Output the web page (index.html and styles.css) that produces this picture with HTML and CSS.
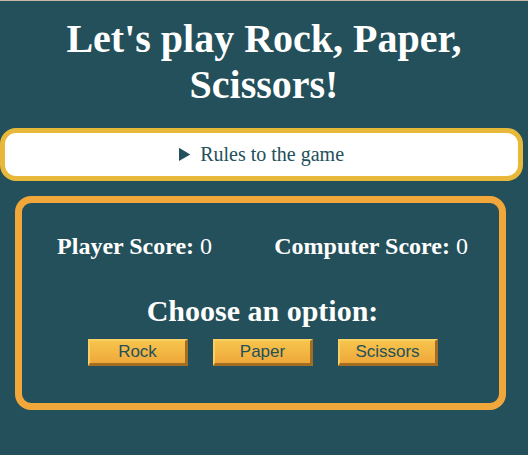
FILE: index.html
```html
<!DOCTYPE html>
<html lang="en">
<head>
<meta charset="utf-8">
<title>Rock, Paper, Scissors</title>
<link rel="stylesheet" href="styles.css">
</head>
<body>
  <h1 class="title">Let's play Rock, Paper, Scissors!</h1>
  <details class="rules">
    <summary class="rules-summary">Rules to the game</summary>
  </details>
  <section class="game">
    <div class="scores">
      <div class="score"><b>Player Score:</b> 0</div>
      <div class="score"><b>Computer Score:</b> 0</div>
    </div>
    <h2 class="choose">Choose an option:</h2>
    <div class="options">
      <button class="opt">Rock</button>
      <button class="opt">Paper</button>
      <button class="opt">Scissors</button>
    </div>
  </section>
</body>
</html>
```

FILE: styles.css
```css
html, body {
  margin: 0;
  padding: 0;
}
body {
  background: #23505a;
  border-top: 1px solid #c7b8a6;
  min-height: 454px;
  font-family: "Liberation Serif", "Times New Roman", serif;
  color: #ffffff;
}
.title {
  margin: 15px 60px 20px;
  font-size: 40px;
  line-height: 46px;
  font-weight: bold;
  text-align: center;
}
.rules {
  box-sizing: border-box;
  width: 523px;
  margin: 0 0 15px 0;
  background: #ffffff;
  border: 5px solid #e8b83b;
  border-radius: 16px;
  color: #23505a;
  font-size: 20px;
  line-height: 23px;
}
.rules-summary {
  padding: 10px 0;
  text-align: center;
  cursor: pointer;
}
.game {
  box-sizing: border-box;
  width: 491px;
  margin: 0 0 0 15px;
  border: 7.5px solid #f2a73b;
  border-radius: 16px;
  padding: 30px 0 37px;
}
.scores {
  display: flex;
  justify-content: space-around;
  font-size: 24px;
  line-height: 27px;
  padding-left: 4px;
}
.score b {
  font-weight: bold;
}
.choose {
  margin: 34px 0 11px;
  padding-left: 4px;
  font-size: 30px;
  line-height: 34px;
  font-weight: bold;
  text-align: center;
}
.options {
  display: flex;
  justify-content: center;
  gap: 25px;
  padding-left: 5px;
}
.opt {
  box-sizing: border-box;
  width: 100px;
  height: 27px;
  padding: 0;
  font-family: "Liberation Sans", Arial, sans-serif;
  font-size: 17px;
  color: #23505a;
  background: linear-gradient(#f6c44b, #efa83b);
  border-style: solid;
  border-width: 2px 3px 3px 2px;
  border-color: #f8cf62 #a36e22 #a36e22 #f8cf62;
  cursor: pointer;
}
```
